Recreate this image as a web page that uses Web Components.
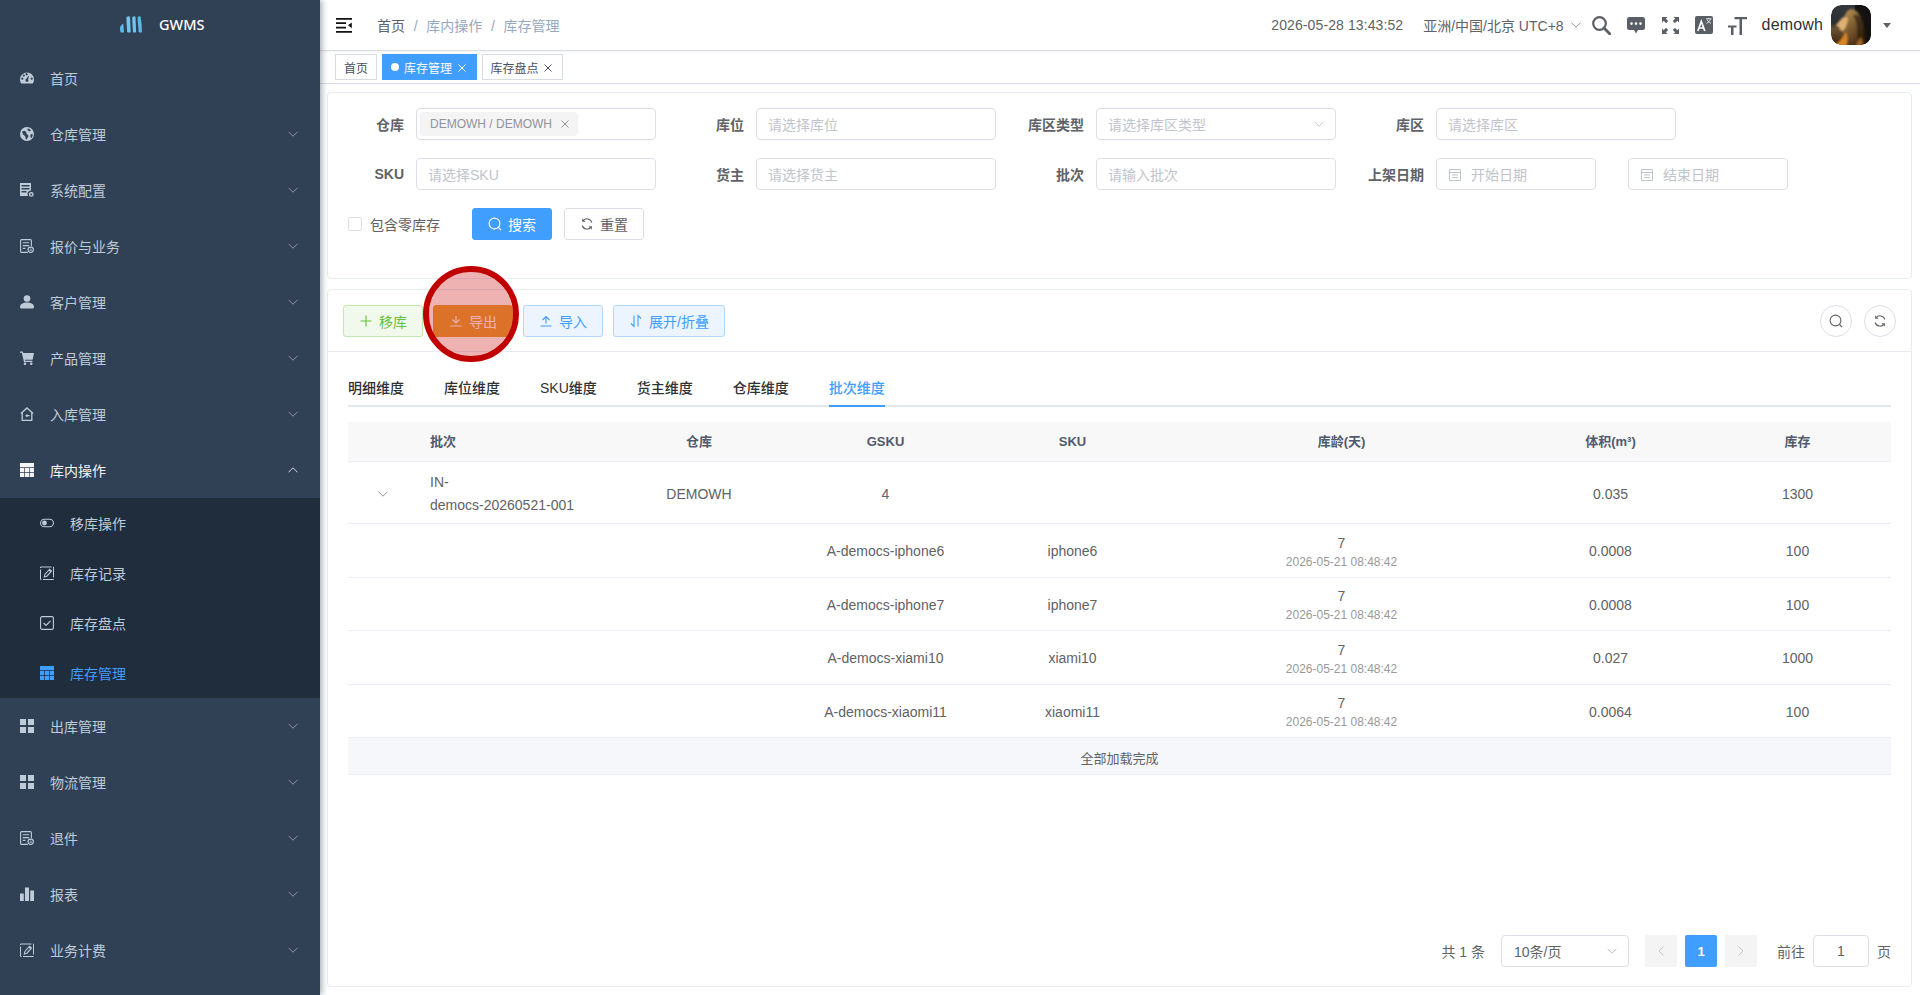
<!DOCTYPE html>
<html lang="zh">
<head>
<meta charset="utf-8">
<title>GWMS</title>
<style>
    html, body { margin: 0; height: 100%; overflow: hidden; background: #fff; }
    body { font-family: "Liberation Sans", "Noto Sans CJK SC", sans-serif; font-size: 14px; color: #606266; }
</style>
</head>
<body>
<wms-app></wms-app>
<script>
const ICONS = {
    dashboard: `<path fill="currentColor" d="M7 1.500a7 7 0 0 0-7 7c0 1.600.5 3 1.300 4h11.400A7 7 0 0 0 14 8.500a7 7 0 0 0-7-7zM2.300 8.800a1.100 1.100 0 1 1 0-2.200 1.100 1.100 0 0 1 0 2.200zm1.500-3.200a1.100 1.100 0 1 1 0-2.200 1.100 1.100 0 0 1 0 2.200zM7 10.900A1.700 1.700 0 0 1 6.300 7.700l2.900-3.500-1.100 4.200A1.700 1.700 0 0 1 7 10.900zM7 4.300a1.100 1.100 0 1 1 0-2.100 1.100 1.100 0 0 1 0 2.100zm4.700 4.500a1.100 1.100 0 1 1 0-2.200 1.100 1.100 0 0 1 0 2.200z"/>`,
    globe: `<path fill="currentColor" fill-rule="evenodd" d="M7 0a7 7 0 1 0 0 14A7 7 0 0 0 7 0zm.6 1.500l1.900.5 1.500 1.400-1.200.9-1.500-.3-.8-1.200zM2 4.500l2.500-.8 1.800 1.200.2 2 1.700 1 .1 1.700-1.500 2.800-1-.4-.6-2.800-2.100-1.600zM10.500 7.500l2-.7.2 1.900-1.400 2.600-1-1.600z"/>`,
    server: `<path fill="currentColor" fill-rule="evenodd" d="M0 0h11v7.500a3.500 3.500 0 0 0-2.900 5.500H0zm1.500 2v1.500h8V2zm0 3v1.500h8V5zm0 3v1.500h5V8zM11.300 9a2.400 2.400 0 1 1 0 4.800 2.400 2.400 0 0 1 0-4.800zm0 1.400a1 1 0 1 0 0 2 1 1 0 0 0 0-2z"/>`,
    quote: `<path fill="none" stroke="currentColor" stroke-width="1.100" d="M7.800 13.400H1.600a1 1 0 0 1-1-1V1.600a1 1 0 0 1 1-1h8.800a1 1 0 0 1 1 1v5.700M2.800 3.800h6.400M2.800 6.600h6.400M2.800 9.400h2.600"/><circle cx="10.700" cy="10.800" r="2.700" fill="none" stroke="currentColor" stroke-width="1.100"/><path fill="currentColor" d="M9.700 9.800h2v.8h-2zm0 1.400h2v.8h-2z"/>`,
    user: `<circle cx="7" cy="3.500" r="3.300" fill="currentColor"/><path fill="currentColor" d="M0 12c0-3 3-4.500 7-4.500S14 9 14 12c0 .8-.5 1.500-1.300 1.500H1.300C.5 13.500 0 12.800 0 12z"/>`,
    cart: `<path fill="currentColor" d="M0 .4h2.700l.6 1.700H14l-1.400 6.600H4.800l.3 1.100h7.300v1.300H4L1.800 1.700H0z"/><circle cx="5" cy="12.700" r="1.300" fill="currentColor"/><circle cx="11.200" cy="12.700" r="1.300" fill="currentColor"/>`,
    homein: `<path fill="none" stroke="currentColor" stroke-width="1.300" d="M.9 6.500L7 1l6.100 5.500M2.200 5.500v7.800h9.600V5.500"/><path fill="currentColor" d="M5 8.700l2.400-1.800v1.200h2.100v1.200H7.400v1.200z"/>`,
    table: `<path fill="currentColor" d="M0 0h14v4.200H0zM0 4.900h4.300v4.200H0zm5 0h4v4.200H5zm4.700 0H14v4.200H9.700zM0 9.800h4.300V14H0zm5 0h4V14H5zm4.700 0H14V14H9.700z"/>`,
    grid: `<path fill="currentColor" d="M0 0h6v6H0zm8 0h6v6H8zM0 8h6v6H0zm8 0h6v6H8z"/>`,
    chart: `<path fill="currentColor" d="M0 6.500h3.800V14H0zm5 -6h4V14H5zm5.200 3H14V14h-3.800z"/>`,
    edit: `<path fill="none" stroke="currentColor" stroke-width="1" stroke-dasharray="11 1.500" d="M.5 1h13v12.500H.5z"/><path fill="none" stroke="currentColor" stroke-width="1.100" d="M4.300 11l.6-2.600 4.700-5.200 1.900 1.800-4.600 5.200zM9 4l1.700 1.700"/>`,
    check: `<rect x=".6" y=".6" width="12.800" height="12.800" rx="1.500" fill="none" stroke="currentColor" stroke-width="1.100"/><path fill="none" stroke="currentColor" stroke-width="1.200" d="M3.600 7l2.500 2.500 4.400-4.600"/>`,
    toggle: `<rect x=".6" y="3.200" width="12.800" height="7.600" rx="3.800" fill="none" stroke="currentColor" stroke-width="1.100"/><circle cx="4.500" cy="7" r="2.400" fill="currentColor"/>`,
};

function svg(name, size = 14) {
    return `<svg width="${size}" height="${size}" viewBox="0 0 14 14" style="display:block;flex:none">${ICONS[name]}</svg>`;
}

const CHEVRON_DOWN = `<svg width="10" height="6" viewBox="0 0 10 6" style="display:block"><path d="M.5.700L5 5.200 9.500.700" fill="none" stroke="currentColor" stroke-width="1"/></svg>`;
const CHEVRON_UP = `<svg width="10" height="6" viewBox="0 0 10 6" style="display:block"><path d="M.5 5.300L5 .8l4.500 4.500" fill="none" stroke="currentColor" stroke-width="1"/></svg>`;
const SEARCH = `<svg width="14" height="14" viewBox="0 0 14 14" style="display:block"><circle cx="6.500" cy="6.500" r="5.400" fill="none" stroke="currentColor" stroke-width="1.100"/><path d="M10.500 10.500l2.500 2.500" stroke="currentColor" stroke-width="1.100"/></svg>`;
const REFRESH = `<svg width="14" height="14" viewBox="0 0 14 14" style="display:block"><path d="M11.800 5.500A5 5 0 0 0 3 3.800M2.200 8.500A5 5 0 0 0 11 10.200" fill="none" stroke="currentColor" stroke-width="1.100"/><path d="M2.700 1.800v2.400h2.400M11.300 12.200V9.800H8.900" fill="none" stroke="currentColor" stroke-width="1.100"/></svg>`;

class SideItem extends HTMLElement {
    connectedCallback() {
        const shadow = this.attachShadow({ mode: "open" });
        const sub = this.hasAttribute("sub");
        const active = this.hasAttribute("active");
        const open = this.hasAttribute("open");
        const arrow = this.getAttribute("arrow");
        const color = active ? "#409eff" : open ? "#f4f4f5" : "#bfcbd9";
        shadow.innerHTML = `<style>
            :host { display: flex; align-items: center; box-sizing: border-box; height: ${sub ? 50 : 56}px;
                padding-left: ${sub ? 40 : 20}px; padding-right: 22px; color: ${color}; font-size: 14px; }
            .ico { color: ${color}; margin-right: 16px; }
            .txt { flex: 1; }
            .arr { color: ${open ? "#d3d6db" : "#909399"}; }
        </style>
        <span class="ico">${svg(this.getAttribute("icon"))}</span>
        <span class="txt"><slot></slot></span>
        ${arrow ? `<span class="arr">${arrow === "up" ? CHEVRON_UP : CHEVRON_DOWN}</span>` : ""}`;
    }
}
customElements.define("side-item", SideItem);

class SideBar extends HTMLElement {
    connectedCallback() {
        const shadow = this.attachShadow({ mode: "open" });
        shadow.innerHTML = `<style>
            :host { display: block; flex: none; width: 320px; height: 995px; background: #304156; overflow: hidden;
                box-shadow: 2px 0 6px rgba(0, 21, 41, .35); position: relative; z-index: 2; }
            .logo { height: 50px; display: flex; align-items: center; gap: 17px; padding-left: 120px; box-sizing: border-box; }
            .logo span { color: #fff; font-family: "Noto Sans", sans-serif; font-weight: 500; font-size: 14.500px; position: relative; top: -1px; }
            .logo svg { position: relative; top: -1px; }
            .sub { background: #1f2d3d; }
        </style>
        <div class="logo">
            <svg width="22" height="17" viewBox="0 0 22 17">
                <path fill="#5eb6e4" d="M0 12c0-2 2-3.500 3.300-4.500L4 16c-.1.700-2.900.8-3.300.2C.2 15.500 0 13.500 0 12z"/>
                <path fill="#71c4ec" d="M6.500 1C8 0 9.900 0 10 1l.7 15c-.2.800-3.200.8-3.500 0C7 11 6.200 5.500 6.500 1z"/>
                <path fill="#71c4ec" d="M12.300 1c1.300-1 3-1 3.200 0l.6 15c-.2.800-2.800.8-3.100 0-.2-5-1-10.500-.7-15z"/>
                <path fill="#5eb6e4" d="M17.700 1c1.300-1 2.800-1 3 0 .7 5 1.300 10 1.300 15-.2.800-3 .8-3.400 0 0-5-1.200-10.500-.9-15z"/>
            </svg>
            <span>GWMS</span>
        </div>
        <side-item icon="dashboard">首页</side-item>
        <side-item icon="globe" arrow="down">仓库管理</side-item>
        <side-item icon="server" arrow="down">系统配置</side-item>
        <side-item icon="quote" arrow="down">报价与业务</side-item>
        <side-item icon="user" arrow="down">客户管理</side-item>
        <side-item icon="cart" arrow="down">产品管理</side-item>
        <side-item icon="homein" arrow="down">入库管理</side-item>
        <side-item icon="table" arrow="up" open>库内操作</side-item>
        <div class="sub">
            <side-item sub icon="toggle">移库操作</side-item>
            <side-item sub icon="edit">库存记录</side-item>
            <side-item sub icon="check">库存盘点</side-item>
            <side-item sub active icon="table">库存管理</side-item>
        </div>
        <side-item icon="grid" arrow="down">出库管理</side-item>
        <side-item icon="grid" arrow="down">物流管理</side-item>
        <side-item icon="quote" arrow="down">退件</side-item>
        <side-item icon="chart" arrow="down">报表</side-item>
        <side-item icon="edit" arrow="down">业务计费</side-item>`;
    }
}
customElements.define("side-bar", SideBar);

class TopBar extends HTMLElement {
    connectedCallback() {
        const shadow = this.attachShadow({ mode: "open" });
        shadow.innerHTML = `<style>
            :host { display: flex; align-items: center; box-sizing: border-box; height: 51px; border-bottom: 1px solid #d8dce5;
                padding: 0 29px 0 16px; color: #606266; font-size: 14px; box-shadow: 0 1px 3px rgba(0, 21, 41, .05); }
            .ham { margin-right: 25px; }
            .crumb { flex: 1; display: flex; align-items: baseline; }
            .crumb i { font-style: normal; color: #97a8be; }
            .sep { color: #97a8be; margin: 0 8.700px; font-weight: 400; }
            .right { display: flex; align-items: center; }
            .dt { letter-spacing: .1px; }
            .tz { margin-left: 20px; color: #606266; display: flex; align-items: center; }
            .tz svg { margin-left: 7px; color: #909399; }
            .ti { display: block; color: #5a5e66; flex: none; }
            .user { font-size: 16px; color: #303133; margin-left: 15px; letter-spacing: .15px; }
            .ava { margin-left: 8px; display: block; border-radius: 10px; }
            .caret { margin-left: 12px; width: 0; height: 0; border: 4px solid transparent; border-top: 5px solid #5a5e66; border-bottom: 0; }
        </style>
        <svg class="ham" width="16" height="15" viewBox="0 0 16 15"><path fill="#111" d="M0 0h16v1.700H0zM0 4.300h10V6H0zM0 8.700h10v1.700H0zM0 13h16v1.700H0zM15.800 4.500v5.700l-3.800-2.900z"/></svg>
        <div class="crumb"><span>首页</span><span class="sep">/</span><i>库内操作</i><span class="sep">/</span><i>库存管理</i></div>
        <div class="right">
            <span class="dt">2026-05-28 13:43:52</span>
            <span class="tz">亚洲/中国/北京 UTC+8${CHEVRON_DOWN}</span>
            <svg class="ti" style="margin-left:11px" width="19" height="19" viewBox="0 0 19 19"><circle cx="7.500" cy="7.500" r="6.300" fill="none" stroke="currentColor" stroke-width="2.200"/><path d="M12 12l5.700 5.700" stroke="currentColor" stroke-width="2.800" stroke-linecap="round"/></svg>
            <svg class="ti" style="margin-left:16px" width="18" height="19" viewBox="0 0 18 19"><path fill="currentColor" fill-rule="evenodd" d="M2.500 1h13A2.500 2.500 0 0 1 18 3.500v8a2.500 2.500 0 0 1-2.500 2.500H11l-2 3.500L7 14H2.500A2.500 2.500 0 0 1 0 11.500v-8A2.500 2.500 0 0 1 2.500 1zM4.500 6.300a1.300 1.300 0 1 0 0 2.600 1.300 1.300 0 0 0 0-2.600zm4.500 0a1.300 1.300 0 1 0 0 2.600 1.300 1.300 0 0 0 0-2.600zm4.500 0a1.300 1.300 0 1 0 0 2.600 1.300 1.300 0 0 0 0-2.600z"/></svg>
            <svg class="ti" style="margin-left:17px" width="17" height="17" viewBox="0 0 17 17"><path fill="currentColor" d="M0 0h5.500L3.800 1.700 6.200 4.100 4.100 6.200 1.700 3.800 0 5.500zM17 0v5.500l-1.700-1.700-2.400 2.400-2.100-2.100 2.400-2.400L11.500 0zM0 17v-5.500l1.700 1.700 2.400-2.400 2.100 2.100-2.400 2.400L5.500 17zM17 17h-5.500l1.700-1.700-2.400-2.400 2.100-2.100 2.400 2.400 1.700-1.700z"/></svg>
            <svg class="ti" style="margin-left:16px" width="18" height="18" viewBox="0 0 18 18"><rect width="18" height="18" rx="2" fill="currentColor"/><path fill="none" stroke="#fff" stroke-width="1.700" d="M2.800 15L6.300 5.500 9.800 15M4 12h4.600"/><path fill="none" stroke="#fff" stroke-width=".8" d="M11 2.800h5.500M13.700 1.800v1M15.500 3c-.5 2-2 3.500-4 4.300M12 3.500c.7 1.800 2.200 3.200 4 3.800"/></svg>
            <svg class="ti" style="margin-left:15px" width="19" height="19" viewBox="0 0 19 19"><path fill="currentColor" d="M6.500 1H19v2.200h-5V19h-2.500V3.200h-5zM0 9.500h8.500v2H5.500V19H3v-7.500H0z"/></svg>
            <span class="user">demowh</span>
            <svg class="ava" width="40" height="40" viewBox="0 0 40 40">
                <defs><clipPath id="c"><rect width="40" height="40" rx="10"/></clipPath>
                <linearGradient id="b" x1="0" y1="0" x2="0" y2="1"><stop offset="0" stop-color="#33383c"/><stop offset=".45" stop-color="#2c3033"/><stop offset=".6" stop-color="#6a5030"/><stop offset="1" stop-color="#3a2410"/></linearGradient>
                <linearGradient id="m" x1="0" y1="0" x2=".6" y2="1"><stop offset="0" stop-color="#d2a868"/><stop offset=".45" stop-color="#8d6a3a"/><stop offset="1" stop-color="#4c3015"/></linearGradient>
                <filter id="s"><feGaussianBlur stdDeviation=".9"/></filter></defs>
                <g clip-path="url(#c)">
                    <rect width="40" height="40" fill="url(#b)"/>
                    <rect x="24" width="16" height="40" fill="#141210"/>
                    <g filter="url(#s)">
                        <path fill="url(#m)" d="M20 4c5 0 9 5 11 11s2 14 3 26H6c3-3 6-8 6-13l-2-4 1-6 3-8c1-3 3-5 6-6z"/>
                        <path fill="#dfb273" d="M6 19l5-6c3-2 5-1 6 1-1 4-2 9-5 12l-3-1-1-3-3-1z"/>
                        <path fill="#1f1409" d="M22 10c3 5 4 10 4 16s1 10 3 15h8c-1-11-2-20-6-28-2-3-5-4-9-3z" opacity=".6"/>
                        <path fill="#d98523" d="M4 41c3-4 8-8 11-14 2 4 2 10 0 14z"/>
                        <path fill="#b8742a" d="M25 41c1-4 3-7 5-9 1 3 2 6 2 9z" opacity=".8"/>
                    </g>
                </g>
            </svg>
            <span class="caret"></span>
        </div>`;
    }
}
customElements.define("top-bar", TopBar);

class TagsBar extends HTMLElement {
    connectedCallback() {
        const shadow = this.attachShadow({ mode: "open" });
        const close = `<svg width="8" height="8" viewBox="0 0 8 8" style="display:block;margin:0 2px 0 5.500px;position:relative;top:1px"><path d="M.5.500l7 7M7.500.500l-7 7" stroke="currentColor" stroke-width="1"/></svg>`;
        shadow.innerHTML = `<style>
            :host { display: flex; align-items: center; box-sizing: border-box; height: 33px; gap: 5px; padding-left: 15px;
                border-bottom: 1px solid #d8dce5; font-size: 12px; color: #495060; }
            .tag { display: flex; align-items: center; box-sizing: border-box; height: 26px; border: 1px solid #d8dce5; padding: 0 8px; background: #fff; }
            .on { background: #409eff; border-color: #409eff; color: #fff; }
            .on::before { content: ""; width: 8px; height: 8px; border-radius: 50%; background: #fff; margin-right: 5px; }
        </style>
        <span class="tag">首页</span>
        <span class="tag on">库存管理${close}</span>
        <span class="tag">库存盘点${close}</span>`;
    }
}
customElements.define("tags-bar", TagsBar);

class FormField extends HTMLElement {
    connectedCallback() {
        const shadow = this.attachShadow({ mode: "open" });
        const w = this.getAttribute("width") || 240;
        const icon = this.getAttribute("type");
        const ph = this.getAttribute("placeholder") || "";
        let pre = "";
        if (icon === "date") {
            pre = `<svg class="cal" width="12" height="13" viewBox="0 0 12 13"><path fill="none" stroke="#c0c4cc" d="M.5 1.500h11v11H.5zM.5 4.500h11M3 7h6M3 9.500h6"/></svg>`;
        }
        shadow.innerHTML = `<style>
            :host { display: block; flex: none; width: ${w}px; }
            .box { display: flex; align-items: center; box-sizing: border-box; height: 32px; border: 1px solid #dcdfe6; border-radius: 4px;
                padding: 0 11px; font-size: 14px; color: #c0c4cc; background: #fff; }
            .ph { flex: 1; }
            .cal { margin-right: 10px; flex: none; margin-left: 1px; }
            .arr { color: #c0c4cc; }
            .chip { display: flex; align-items: center; height: 24px; background: #f4f4f5; border-radius: 4px; margin-left: -8px; padding: 0 9px 0 10px;
                font-size: 12px; color: #909399; }
            .chip svg { margin-left: 9px; }
        </style>
        <div class="box">${pre}
            ${icon === "chip" ? `<span class="chip">DEMOWH / DEMOWH<svg width="8" height="8" viewBox="0 0 8 8"><path d="M.5.500l7 7M7.500.500l-7 7" stroke="#909399"/></svg></span>` : `<span class="ph">${ph}</span>`}
            ${icon === "select" ? `<span class="arr">${CHEVRON_DOWN}</span>` : ""}
        </div>`;
    }
}
customElements.define("form-field", FormField);

class FormItem extends HTMLElement {
    connectedCallback() {
        const shadow = this.attachShadow({ mode: "open" });
        shadow.innerHTML = `<style>
            :host { display: flex; align-items: center; flex: none; }
            .lb { width: 76px; padding-right: 12px; text-align: right; font-weight: 700; font-size: 14px; color: #606266; white-space: nowrap; }
            .fields { display: flex; gap: 32px; }
        </style>
        <span class="lb">${this.getAttribute("label")}</span>
        <div class="fields"><slot></slot></div>`;
    }
}
customElements.define("form-item", FormItem);

class WmsButton extends HTMLElement {
    connectedCallback() {
        const shadow = this.attachShadow({ mode: "open" });
        const kind = this.getAttribute("kind");
        const colors = {
            primary: "background:#409eff;border-color:#409eff;color:#fff",
            reset: "background:#fff;border-color:#dcdfe6;color:#606266",
            success: "background:#f0f9eb;border-color:#c2e7b0;color:#67c23a",
            warning: "background:#e6a23c;border-color:#e6a23c;color:#fff",
            info: "background:#ecf5ff;border-color:#b3d8ff;color:#409eff",
        };
        shadow.innerHTML = `<style>
            :host { display: inline-flex; flex: none; }
            .btn { display: flex; align-items: center; justify-content: center; box-sizing: border-box; height: 32px; padding: 0 15px;
                min-width: 80px; border: 1px solid; border-radius: 3px; font-size: 14px; ${colors[kind]}; }
            .ic { margin-right: 6px; display: block; }
        </style>
        <div class="btn"><span class="ic"><slot name="icon"></slot></span><slot></slot></div>`;
    }
}
customElements.define("wms-button", WmsButton);

class RowGrid extends HTMLElement {
    connectedCallback() {
        const shadow = this.attachShadow({ mode: "open" });
        const h = this.getAttribute("h");
        const head = this.hasAttribute("head");
        shadow.innerHTML = `<style>
            :host { display: grid; grid-template-columns: 70px 188px 186px 187px 187px 351px 187px 187px; align-items: center; box-sizing: border-box;
                height: ${h}px; border-bottom: 1px solid #ebeef5; font-size: ${head ? 13 : 14}px; line-height: 23px;
                ${head ? "background:#f8f8f9;color:#515a6e;font-weight:700;" : "color:#606266;padding-top:3px;"} }
            ::slotted(*) { text-align: center; padding: 0 12px; box-sizing: border-box; min-width: 0; }
        </style><slot></slot>`;
    }
}
customElements.define("row-grid", RowGrid);

class StockTable extends HTMLElement {
    connectedCallback() {
        const shadow = this.attachShadow({ mode: "open" });
        const rows = [
            ["A-democs-iphone6", "iphone6", "0.0008", "100"],
            ["A-democs-iphone7", "iphone7", "0.0008", "100"],
            ["A-democs-xiami10", "xiami10", "0.027", "1000"],
            ["A-democs-xiaomi11", "xiaomi11", "0.0064", "100"],
        ];
        const lower = rows.map(r => `<row-grid h="53.500"><div></div><div></div><div></div><div>${r[0]}</div><div>${r[1]}</div>
            <div class="age"><div>7</div><small>2026-05-21 08:48:42</small></div><div>${r[2]}</div><div>${r[3]}</div></row-grid>`).join("");
        shadow.innerHTML = `<style>
            :host { display: block; margin: 15px 20px 0; }
            .left { text-align: left; }
            .age { line-height: 20px; }
            small { display: block; font-size: 12px; color: #999; line-height: 18px; }
            .arr { color: #909399; display: flex; justify-content: center; padding: 0; }
            .foot { height: 37px; background: #f5f7fa; border-bottom: 1px solid #ebeef5; box-sizing: border-box; padding-top: 3px; display: flex; align-items: center; justify-content: center; font-size: 13px; color: #606266; }
        </style>
        <row-grid h="40" head><div></div><div class="left">批次</div><div>仓库</div><div>GSKU</div><div>SKU</div><div>库龄(天)</div><div>体积(m³)</div><div>库存</div></row-grid>
        <row-grid h="62"><div class="arr">${CHEVRON_DOWN}</div><div class="left">IN-<br>democs-20260521-001</div><div>DEMOWH</div><div>4</div><div></div><div></div><div>0.035</div><div>1300</div></row-grid>
        ${lower}
        <div class="foot">全部加载完成</div>`;
    }
}
customElements.define("stock-table", StockTable);

class PagerBar extends HTMLElement {
    connectedCallback() {
        const shadow = this.attachShadow({ mode: "open" });
        shadow.innerHTML = `<style>
            :host { display: flex; align-items: center; justify-content: flex-end; margin-top: auto; height: 32px; padding: 0 20px 19px 0; font-size: 14px; color: #606266; }
            .sel { box-sizing: border-box; width: 128px; height: 32px; border: 1px solid #dcdfe6; border-radius: 4px; margin: 0 16px; padding: 0 11px 0 12px;
                display: flex; align-items: center; justify-content: space-between; }
            .sel svg { color: #c0c4cc; }
            .pg { width: 32px; height: 32px; border-radius: 2px; background: #f4f4f5; display: flex; align-items: center; justify-content: center; margin-right: 8px; color: #c0c4cc; }
            .cur { background: #409eff; color: #fff; font-weight: 700; font-size: 13px; }
            .go { margin: 0 8px 0 12px; }
            .inp { box-sizing: border-box; width: 56px; height: 32px; border: 1px solid #dcdfe6; border-radius: 4px; display: flex; align-items: center; justify-content: center; margin-right: 8px; }
        </style>
        <span>共 1 条</span>
        <div class="sel"><span>10条/页</span>${CHEVRON_DOWN}</div>
        <div class="pg"><svg width="6" height="10" viewBox="0 0 6 10"><path d="M5.500.500L1 5l4.500 4.500" fill="none" stroke="currentColor"/></svg></div>
        <div class="pg cur">1</div>
        <div class="pg"><svg width="6" height="10" viewBox="0 0 6 10"><path d="M.5.500L5 5 .5 9.500" fill="none" stroke="currentColor"/></svg></div>
        <span class="go">前往</span>
        <div class="inp">1</div>
        <span>页</span>`;
    }
}
customElements.define("pager-bar", PagerBar);

class WmsCard extends HTMLElement {
    connectedCallback() {
        const shadow = this.attachShadow({ mode: "open" });
        shadow.innerHTML = `<style>
            :host { display: flex; flex-direction: column; box-sizing: border-box; border: 1px solid #e6ebf5; border-radius: 4px; background: #fff; }
        </style><slot></slot>`;
    }
}
customElements.define("wms-card", WmsCard);

class SearchPanel extends HTMLElement {
    connectedCallback() {
        const shadow = this.attachShadow({ mode: "open" });
        shadow.innerHTML = `<style>
            :host { display: flex; flex-direction: column; gap: 18px; padding: 15px 0 0 0; }
            .row { display: flex; gap: 12px; }
            .acts { display: flex; align-items: center; padding-left: 20px; }
            .cb { width: 14px; height: 14px; box-sizing: border-box; border: 1px solid #dcdfe6; border-radius: 2px; margin-right: 8px; }
            .cl { margin-right: 32px; color: #606266; }
            .acts wms-button + wms-button { margin-left: 12px; }
            svg { display: block; }
        </style>
        <div class="row">
            <form-item label="仓库"><form-field type="chip"></form-field></form-item>
            <form-item label="库位"><form-field placeholder="请选择库位"></form-field></form-item>
            <form-item label="库区类型"><form-field type="select" placeholder="请选择库区类型"></form-field></form-item>
            <form-item label="库区"><form-field placeholder="请选择库区"></form-field></form-item>
        </div>
        <div class="row">
            <form-item label="SKU"><form-field placeholder="请选择SKU"></form-field></form-item>
            <form-item label="货主"><form-field placeholder="请选择货主"></form-field></form-item>
            <form-item label="批次"><form-field placeholder="请输入批次"></form-field></form-item>
            <form-item label="上架日期"><form-field type="date" width="160" placeholder="开始日期"></form-field><form-field type="date" width="160" placeholder="结束日期"></form-field></form-item>
        </div>
        <div class="acts">
            <span class="cb"></span><span class="cl">包含零库存</span>
            <wms-button kind="primary"><span slot="icon">${SEARCH}</span>搜索</wms-button>
            <wms-button kind="reset"><span slot="icon">${REFRESH}</span>重置</wms-button>
        </div>`;
    }
}
customElements.define("search-panel", SearchPanel);

class StockPanel extends HTMLElement {
    connectedCallback() {
        const shadow = this.attachShadow({ mode: "open" });
        const icon = (d) => `<svg width="14" height="14" viewBox="0 0 14 14" style="display:block"><path d="${d}" fill="none" stroke="currentColor" stroke-width="1.100"/></svg>`;
        shadow.innerHTML = `<style>
            :host { display: flex; flex-direction: column; flex: 1; min-height: 0; }
            .tools { display: flex; align-items: center; gap: 10px; height: 62px; box-sizing: border-box; padding: 0 15px; border-bottom: 1px solid #e6ebf5; position: relative; }
            .grow { flex: 1; }
            .round { width: 32px; height: 32px; box-sizing: border-box; border: 1px solid #dcdfe6; border-radius: 50%; display: flex; align-items: center; justify-content: center; color: #606266; }
            .round + .round { margin-left: 2px; }
            .mark { position: absolute; left: 95px; top: -24px; width: 96px; height: 96px; box-sizing: border-box; border: 6px solid #c00000;
                border-radius: 50%; background: rgba(200, 0, 0, .3); background-clip: padding-box; }
            .tabs { display: flex; gap: 40px; margin: 0 20px; height: 55px; align-items: flex-end; box-sizing: border-box; border-bottom: 2px solid #e4e7ed; font-weight: 500; color: #303133; }
            .tabs span { height: 40px; line-height: 42px; box-sizing: border-box; margin-bottom: -2px; }
            .tabs .on { color: #409eff; border-bottom: 2px solid #409eff; }
        </style>
        <div class="tools">
            <wms-button kind="success"><span slot="icon">${icon("M7 1.500v11M1.500 7h11")}</span>移库</wms-button>
            <wms-button kind="warning"><span slot="icon">${icon("M7 2v6.500M3.500 5.500L7 9l3.500-3.500M1.500 12h11")}</span>导出</wms-button>
            <wms-button kind="info"><span slot="icon">${icon("M7 9.500V3M3.500 6L7 2.500 10.500 6M1.500 12h11")}</span>导入</wms-button>
            <wms-button kind="info"><span slot="icon">${icon("M5 1.500v11L2 9.500M9 12.500v-11l3 3")}</span>展开/折叠</wms-button>
            <span class="grow"></span>
            <span class="round">${SEARCH}</span>
            <span class="round">${REFRESH}</span>
            <span class="mark"></span>
        </div>
        <div class="tabs"><span>明细维度</span><span>库位维度</span><span>SKU维度</span><span>货主维度</span><span>仓库维度</span><span class="on">批次维度</span></div>
        <stock-table></stock-table>
        <pager-bar></pager-bar>`;
    }
}
customElements.define("stock-panel", StockPanel);

class WmsApp extends HTMLElement {
    connectedCallback() {
        const shadow = this.attachShadow({ mode: "open" });
        shadow.innerHTML = `<style>
            :host { display: flex; width: 1920px; height: 995px; }
            main { flex: 1; min-width: 0; display: flex; flex-direction: column; }
            .content { flex: 1; display: flex; flex-direction: column; gap: 10px; padding: 8px 8px 8px 7px; min-height: 0; }
            .c1 { height: 187px; }
            .c2 { flex: 1; min-height: 0; }
        </style>
        <side-bar></side-bar>
        <main>
            <top-bar></top-bar>
            <tags-bar></tags-bar>
            <div class="content">
                <wms-card class="c1"><search-panel></search-panel></wms-card>
                <wms-card class="c2"><stock-panel></stock-panel></wms-card>
            </div>
        </main>`;
    }
}
customElements.define("wms-app", WmsApp);
</script>
</body>
</html>
